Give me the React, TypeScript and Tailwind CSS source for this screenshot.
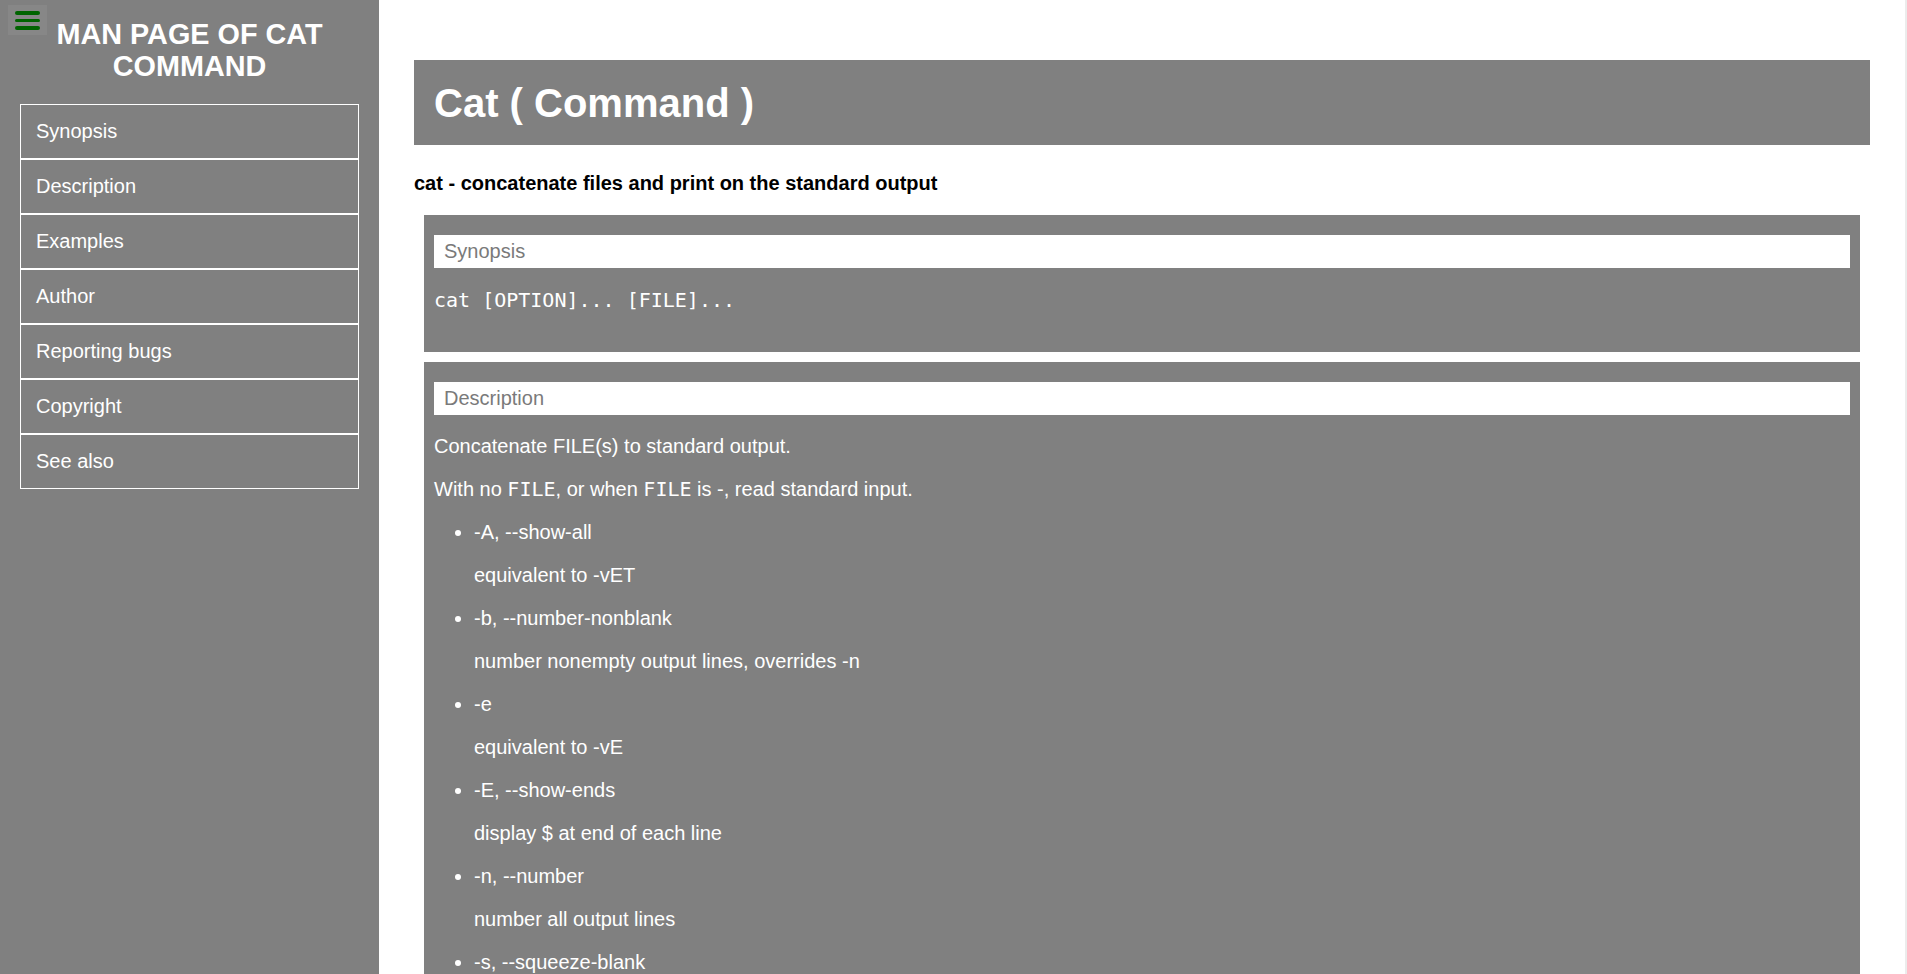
import React from 'react';

const navItems = ['Synopsis', 'Description', 'Examples', 'Author', 'Reporting bugs', 'Copyright', 'See also'];

const options: [string, string][] = [
  ['-A, --show-all', 'equivalent to -vET'],
  ['-b, --number-nonblank', 'number nonempty output lines, overrides -n'],
  ['-e', 'equivalent to -vE'],
  ['-E, --show-ends', 'display $ at end of each line'],
  ['-n, --number', 'number all output lines'],
  ['-s, --squeeze-blank', 'suppress repeated empty output lines'],
  ['-t', 'equivalent to -vT'],
  ['-T, --show-tabs', 'display TAB characters as ^I'],
  ['-u', '(ignored)'],
  ['-v, --show-nonprinting', 'use ^ and M- notation, except for LFD and TAB'],
  ['--help', 'display this help and exit'],
  ['--version', 'output version information and exit'],
];

const mono = "font-['DejaVu_Sans_Mono','Liberation_Mono',monospace]";

const Section: React.FC<{ title: string; children: React.ReactNode }> = ({ title, children }) => (
  <section className="mx-[10px] mb-[10px] bg-[#808080] px-[10px] pt-5 pb-5 text-white">
    <div className="bg-white px-[10px] py-[5px] text-[20px] leading-[23px] text-[#7a7a7a]">{title}</div>
    {children}
  </section>
);

const App: React.FC = () => {
  return (
    <div className="flex h-screen w-full overflow-hidden bg-white font-['Liberation_Sans',Arial,sans-serif]">
      {/* Sidebar */}
      <aside className="relative w-[379px] shrink-0 bg-[#808080] px-5 text-white">
        <button className="absolute top-[5px] left-[8px] flex h-[30px] w-[39px] flex-col gap-[4px] bg-[#878787] pt-[6px] pl-[7px]">
          <span className="block h-[3.5px] w-[25px] rounded-full bg-[#006400]" />
          <span className="block h-[3.5px] w-[25px] rounded-full bg-[#006400]" />
          <span className="block h-[3.5px] w-[25px] rounded-full bg-[#006400]" />
        </button>
        <h1 className="mt-[18px] mb-[22px] text-center text-[28.8px] font-bold leading-[32px]">MAN PAGE OF CAT COMMAND</h1>
        <ul>
          {navItems.map((item) => (
            <li key={item} className="border border-white px-[15px] py-[15px] text-[20px] leading-[23px]">
              {item}
            </li>
          ))}
        </ul>
      </aside>

      {/* Main content */}
      <main className="flex-1 overflow-hidden px-[35px] pt-[60px]">
        <div className="bg-[#808080] px-5 py-[19.5px] text-[40px] font-bold leading-[46px] text-white">Cat ( Command )</div>
        <p className="mt-[27px] mb-5 text-[20px] font-bold leading-[23px] text-black">
          cat - concatenate files and print on the standard output
        </p>

        <Section title="Synopsis">
          <p className={`${mono} mt-5 text-[20px] leading-[24px]`}>cat [OPTION]... [FILE]...</p>
          <div className="h-5" />
        </Section>

        <Section title="Description">
          <div className="text-[20px] leading-[23px]">
            <p className="my-5">Concatenate FILE(s) to standard output.</p>
            <p className="my-5">
              With no <code className={`${mono} text-[20px]`}>FILE</code>, or when <code className={`${mono} text-[20px]`}>FILE</code> is -, read standard input.
            </p>
            <ul className="list-disc pl-10">
              {options.map(([flag, desc]) => (
                <li key={flag}>
                  <p className="my-5">{flag}</p>
                  <p className="my-5">{desc}</p>
                </li>
              ))}
            </ul>
          </div>
        </Section>

        <Section title="Examples">
          <div className="text-[20px] leading-[23px]">
            <p className="my-5">cat f - g</p>
            <p className="my-5">Output f's contents, then standard input, then g's contents.</p>
            <p className="my-5">cat</p>
            <p className="my-5">Copy standard input to standard output.</p>
          </div>
        </Section>
      </main>

      {/* scroll track edge */}
      <div className="w-[2px] shrink-0 bg-[#ececec]" />
    </div>
  );
};

export default App;
